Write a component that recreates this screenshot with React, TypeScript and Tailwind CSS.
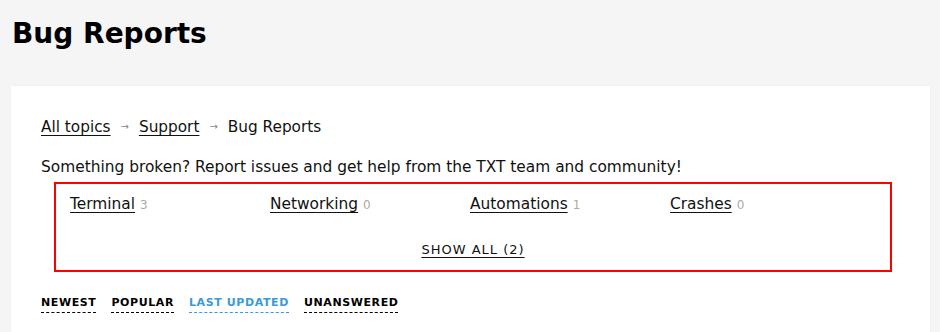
const categories = [
  { name: "Terminal", count: 3 },
  { name: "Networking", count: 0 },
  { name: "Automations", count: 1 },
  { name: "Crashes", count: 0 },
];

const tabs = ["Newest", "Popular", "Last updated", "Unanswered"];

const App = () => {
  return (
    <div className="w-[940px] h-[332px] overflow-hidden bg-[#f5f5f5] font-['DejaVu_Sans',sans-serif] text-[#111]">
      <h1 className="pl-[12px] pt-[14px] h-[86px] text-[28px] font-bold leading-[40px] text-black">
        Bug Reports
      </h1>
      <div className="ml-[11px] mr-[10px] bg-white px-[30px] pt-[30px] pb-10 shadow-[0_0_2px_rgba(0,0,0,0.05)]">
        <nav className="flex items-center gap-[10px] text-[15.3px] leading-[22px]">
          <a href="#" className="underline underline-offset-[3px]">All topics</a>
          <span className="text-[10px] text-[#888]">→</span>
          <a href="#" className="underline underline-offset-[3px]">Support</a>
          <span className="text-[10px] text-[#888]">→</span>
          <span>Bug Reports</span>
        </nav>
        <p className="mt-[18px] text-[15.4px] leading-[22px]">
          Something broken? Report issues and get help from the TXT team and community!
        </p>
        <div className="mt-[4px] ml-[13px] w-[838px] border-2 border-[#ff0000] px-[14px] pt-[9px] pb-[9px]">
          <div className="grid grid-cols-[repeat(4,200px)]">
            {categories.map((c) => (
              <div key={c.name} className="text-[15.4px] leading-[22px]">
                <a href="#" className="underline underline-offset-[3px]">{c.name}</a>
                <span className="ml-[5px] text-[12px] text-[#aaa]">{c.count}</span>
              </div>
            ))}
          </div>
          <div className="mt-[21px] text-center">
            <a href="#" className="text-[13px] uppercase tracking-[1px] underline underline-offset-[3px] leading-[20px]">
              Show all (2)
            </a>
          </div>
        </div>
        <div className="mt-[23px] flex gap-[15px]">
          {tabs.map((t) => (
            <a
              key={t}
              href="#"
              className={`border-b border-dashed pb-[1px] text-[11px] font-bold uppercase tracking-[0.6px] leading-[16px] ${
                t === "Last updated"
                  ? "border-[#3a9ad9] text-[#3a9ad9]"
                  : "border-black text-black"
              }`}
            >
              {t}
            </a>
          ))}
        </div>
      </div>
    </div>
  );
};

export default App;
